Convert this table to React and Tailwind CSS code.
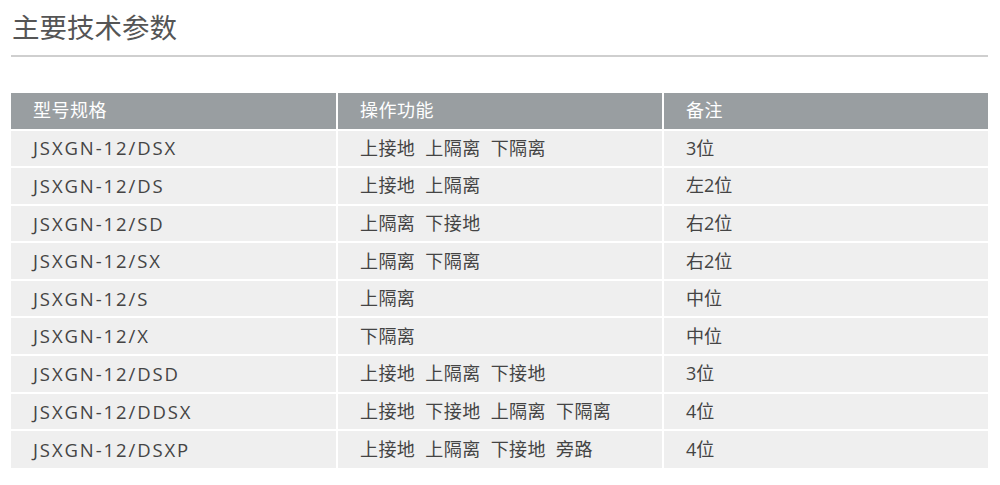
const rows = [
  ["JSXGN-12/DSX", "上接地\u00a0\u00a0上隔离\u00a0\u00a0下隔离", "3位"],
  ["JSXGN-12/DS", "上接地\u00a0\u00a0上隔离", "左2位"],
  ["JSXGN-12/SD", "上隔离\u00a0\u00a0下接地", "右2位"],
  ["JSXGN-12/SX", "上隔离\u00a0\u00a0下隔离", "右2位"],
  ["JSXGN-12/S", "上隔离", "中位"],
  ["JSXGN-12/X", "下隔离", "中位"],
  ["JSXGN-12/DSD", "上接地\u00a0\u00a0上隔离\u00a0\u00a0下接地", "3位"],
  ["JSXGN-12/DDSX", "上接地\u00a0\u00a0下接地\u00a0\u00a0上隔离\u00a0\u00a0下隔离", "4位"],
  ["JSXGN-12/DSXP", "上接地\u00a0\u00a0上隔离\u00a0\u00a0下接地\u00a0\u00a0旁路", "4位"],
];

export default function App() {
  return (
    <div
      className="w-[1000px] h-[485px] bg-white pl-[11px] pr-[12px] pt-[8px]"
      style={{ fontFamily: '"Open Sans", "Noto Sans CJK SC", sans-serif' }}
    >
      <div className="text-[27.5px] leading-[40px] text-[#555] pl-[1px]">主要技术参数</div>
      <div className="mt-[7px] h-[1.5px] bg-[#cfcfcf]" />
      <table className="mt-[36px] w-full border-collapse text-[18px] text-[#444] table-fixed">
        <colgroup>
          <col className="w-[326px]" />
          <col className="w-[326px]" />
          <col />
        </colgroup>
        <thead>
          <tr className="bg-[#999ea1] text-white h-[37px]">
            <th className="font-normal text-left pl-[22px] tracking-[0.5px] border-r-2 border-white">型号规格</th>
            <th className="font-normal text-left pl-[22px] tracking-[0.5px] border-r-2 border-white">操作功能</th>
            <th className="font-normal text-left pl-[22px] tracking-[0.5px]">备注</th>
          </tr>
        </thead>
        <tbody>
          {rows.map((r, i) => (
            <tr key={i} className="bg-[#efefef] h-[37.6px] border-t-2 border-white">
              <td className="pl-[22px] text-[18.5px] tracking-[1.9px] border-r-2 border-white">{r[0]}</td>
              <td className="pl-[22px] tracking-[0.4px] border-r-2 border-white">{r[1]}</td>
              <td className="pl-[22px]">{r[2]}</td>
            </tr>
          ))}
        </tbody>
      </table>
    </div>
  );
}
